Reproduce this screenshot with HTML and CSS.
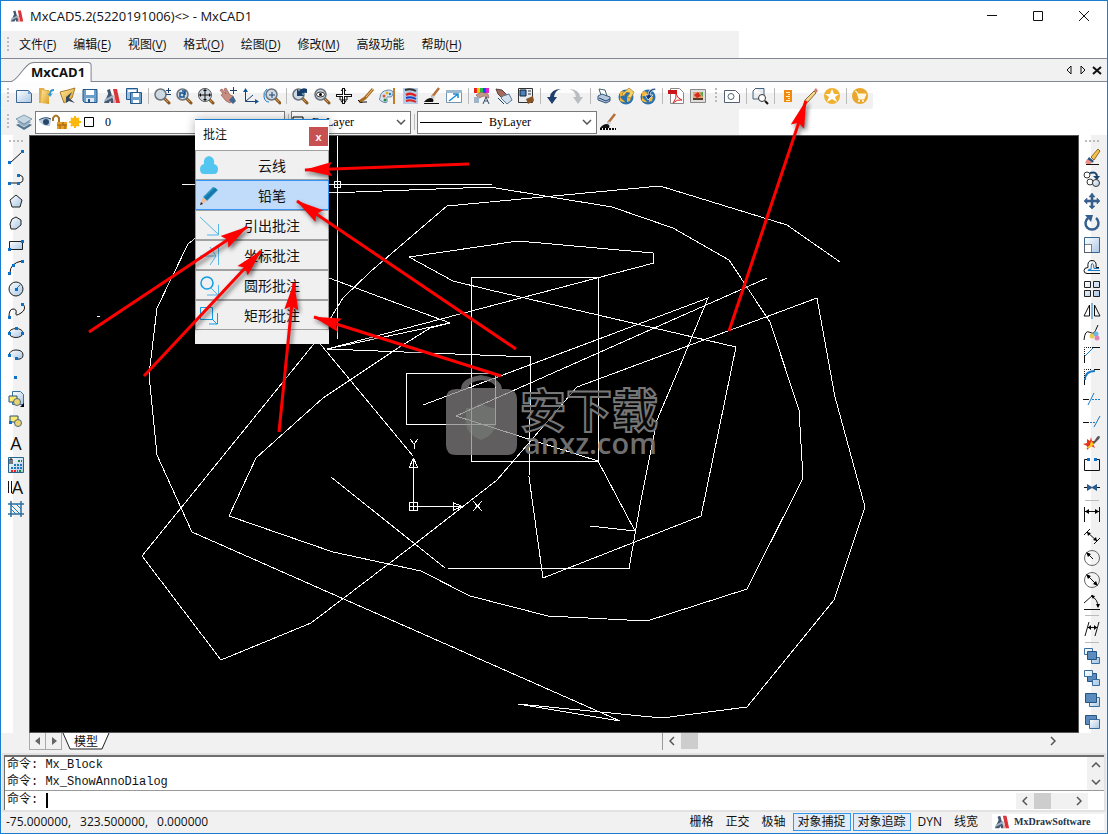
FILE: index.html
```html
<!DOCTYPE html>
<html lang="zh-CN">
<head>
<meta charset="utf-8">
<title>MxCAD5.2(5220191006)&lt;&gt; - MxCAD1</title>
<link rel="stylesheet" href="styles.css">
</head>
<body>
<svg class="defs" aria-hidden="true">
  <defs>
    <linearGradient id="paper" x1="0" y1="0" x2="1" y2="1"><stop offset="0" stop-color="#fff"/><stop offset="1" stop-color="#a9c6e4"/></linearGradient>
    <linearGradient id="gold" x1="0" y1="0" x2="1" y2="1"><stop offset="0" stop-color="#ffe9a0"/><stop offset="1" stop-color="#dc9c20"/></linearGradient>
    <symbol id="lens" viewBox="0 0 18 18"><path d="M11 11l5 5" stroke="#8b5a20" stroke-width="3" stroke-linecap="round"/><path d="M11 11l4 4" stroke="#d79a4e"/><circle cx="7.500" cy="7.500" r="5.500" fill="#cfd9e2" stroke="#6b737d" stroke-width="1.500"/></symbol>
    <symbol id="logo" viewBox="0 0 18 18"><path d="M1 16L6 5l3 4-3 7zM4 3l3-1 4 14H8z" fill="#41576f"/><path d="M10 2h4l3 14h-4z" fill="#d8343a"/><path d="M2 12l8-4 1 2-10 5z" fill="#9db0c3"/><path d="M11 8l2 8h-3z" fill="#e99"/></symbol>
    <symbol id="brush" viewBox="0 0 18 18"><path d="M16 1L9 10" stroke="#b4713a" stroke-width="2.500"/><path d="M10 8l-3 4 2 1 3-3z" fill="#c9ccd0"/><path d="M8 11q-4 0-7 4h9q1-2 0-3z" fill="#111"/></symbol>
    <symbol id="globe" viewBox="0 0 18 18"><circle cx="9" cy="10" r="7.500" fill="#2b72ad"/><path d="M3 5q4-2 5 1t-3 3 1 4-3 1zM10 9l4 1-1 4-3 1z" fill="#f2b53a"/></symbol>
    <marker id="head" viewBox="0 0 28 16" refX="27" refY="8" markerWidth="28" markerHeight="16" markerUnits="userSpaceOnUse" orient="auto"><path d="M28 8L0 1l4 7-4 7z" fill="#f00"/></marker>
  </defs>
</svg>
<div class="window">
  <header class="titlebar">
    <svg class="app-icon" viewBox="0 0 18 18"><use href="#logo"/></svg>
    <h1>MxCAD5.2(5220191006)&lt;&gt; - MxCAD1</h1>
    <div class="window-buttons">
      <button aria-label="最小化"><svg viewBox="0 0 12 12"><path class="k" d="M1 5.500h10"/></svg></button>
      <button aria-label="最大化"><svg viewBox="0 0 12 12"><path class="k" d="M1.500 1.500h9v9h-9z"/></svg></button>
      <button aria-label="关闭"><svg viewBox="0 0 12 12"><path class="k" d="M1 1l10 10M11 1L1 11"/></svg></button>
    </div>
  </header>
  <nav class="menubar">
    <span class="grip"></span>
    <button>文件(<u>F</u>)</button><button>编辑(<u>E</u>)</button><button>视图(<u>V</u>)</button><button>格式(<u>O</u>)</button><button>绘图(<u>D</u>)</button><button>修改(<u>M</u>)</button><button>高级功能</button><button>帮助(<u>H</u>)</button>
  </nav>
  <div class="doc-tabs">
    <button class="doc-tab"><svg viewBox="0 0 82 20" preserveAspectRatio="none"><path d="M0 20C9 18 13 4 21 1q1-.5 3-.5h54q3 0 3 3V20" fill="#fff" stroke="#7d8290"/></svg><span>MxCAD1</span></button>
    <div class="doc-nav">
      <button aria-label="上一个"><svg viewBox="0 0 10 10"><path class="k" d="M7 1v8L3 5z"/></svg></button>
      <button aria-label="下一个"><svg viewBox="0 0 10 10"><path class="k" d="M3 1v8l4-4z"/></svg></button>
      <button aria-label="关闭文档"><svg viewBox="0 0 10 10"><path class="k w2" d="M1 2l8 7M9 2L1 9"/></svg></button>
    </div>
  </div>
  <div class="toolbar standard">
    <div class="strip">
    <span class="grip"></span>
    <button class="tool" aria-label="新建"><svg viewBox="0 0 18 18"><path d="M1.500 3.500h12l3 3v9h-15z" fill="url(#paper)" stroke="#3d6590"/><path d="M13 3v4h4" fill="#7ea3c8"/></svg></button>
    <button class="tool" aria-label="打开"><svg viewBox="0 0 18 18"><path d="M2 1h5l1 2h4v13H2z" fill="#e4b04a"/><path d="M5 3l7 2v12l-8-1z" fill="url(#gold)"/><path d="M17 2q-5 0-5 5l-2-1 3 4 3-4-2 1q0-3 3-3z" fill="#329bd4"/></svg></button>
    <button class="tool" aria-label="打开云图"><svg viewBox="0 0 18 18"><path d="M1 5l8-2 7-2-3 10-8 5z" fill="url(#gold)" stroke="#a87b2b"/><path d="M7 10l6-5-3 6 6 5-6-2-3 2z" fill="#33465e"/></svg></button>
    <button class="tool" aria-label="保存"><svg viewBox="0 0 18 18"><path d="M2 2.500h14v13H3.500L2 14z" fill="#6a9fcb" stroke="#24588a"/><path d="M5 3h8v5H5z" fill="#fff"/><path d="M5 11h8v4H5z" fill="#dde8f2"/><path d="M7 12h2v3H7z" fill="#24588a"/></svg></button>
    <button class="tool" aria-label="MxDraw"><svg viewBox="0 0 18 18"><use href="#logo"/></svg></button>
    <button class="tool" aria-label="另存为"><svg viewBox="0 0 18 18"><path d="M1.500 1.500h11v11h-11z" fill="#9fc1e0" stroke="#24588a"/><path d="M3 3h8v2H3z" fill="#fff"/><path d="M5.500 5.500h11v11h-11z" fill="#6a9fcb" stroke="#24588a"/><path d="M8 6h6v4H8zM8 13h6v3H8z" fill="#fff"/></svg></button>
    <span class="sep"></span>
    <button class="tool" aria-label="实时缩放"><svg viewBox="0 0 18 18"><use href="#lens"/><path class="n" d="M13 3.500h5M15.500 1v5M13 7.500h5"/></svg></button>
    <button class="tool" aria-label="窗口缩放"><svg viewBox="0 0 18 18"><use href="#lens"/><path d="M5 6h4v4H5zM7 4h3v4" fill="none" stroke="#17558f" stroke-width="1.500"/></svg></button>
    <button class="tool" aria-label="范围缩放"><svg viewBox="0 0 18 18"><use href="#lens"/><circle cx="8" cy="8" r="6.500" fill="#ccd5de" stroke="#555"/><path class="k" d="M8 3v10M3 8h10"/><path d="M8 2l2 2H6zM8 14l2-2H6zM2 8l2-2v4zM14 8l-2-2v4z"/></svg></button>
    <button class="tool" aria-label="平移"><svg viewBox="0 0 18 18"><path d="M1 3l2-1 4 5-2-5 2-1 4 7 3 1 1 4-4 3-4-2-5-6 2-1z" fill="#c98e80" stroke="#8b5148" stroke-width=".6"/><path d="M10 13l4-4 3 5-3 3z" fill="#41658f"/><path class="n" d="M14.500 0v7M11 3.500h7"/></svg></button>
    <button class="tool" aria-label="坐标系"><svg viewBox="0 0 18 18"><path class="n" d="M4.500 3v11.500h11M5 14l7-6"/><path d="M2 5l2.500-4L7 5zM14 12l4 2.500-4 2.500z" fill="#17558f"/></svg></button>
    <button class="tool" aria-label="动态缩放"><svg viewBox="0 0 18 18"><use href="#lens" x="1"/><path class="n" d="M9 5v6M6 8h6"/><path class="b" d="M4 2Q0 5 1 10t5 5"/></svg></button>
    <span class="sep"></span>
    <button class="tool" aria-label="上一视图"><svg viewBox="0 0 18 18"><use href="#lens"/><path d="M16 6V2q-5-2-8 2L6 2v7h7l-2-2q1-2 5-1z" fill="#153e6d"/></svg></button>
    <button class="tool" aria-label="查看"><svg viewBox="0 0 18 18"><use href="#lens"/><ellipse cx="7.500" cy="7.500" rx="4" ry="2.500" fill="#fff" stroke="#333"/><circle cx="7.500" cy="7.500" r="1.500"/></svg></button>
    <button class="tool" aria-label="十字平移"><svg viewBox="0 0 18 18"><path d="M8.500 1v16M1 8.500h16" stroke="#111" stroke-width="3"/><path d="M8.500 2v14M2 8.500h14" stroke="#fff"/><path class="k" d="M5 10v3h7v-3M6 4l2.500-3L11 4M6 14l2.500 3 2.500-3"/></svg></button>
    <button class="tool" aria-label="刷新"><svg viewBox="0 0 18 18"><path d="M16 2L8 11l-6 4" stroke="#a66a20" stroke-width="3" fill="none"/><path d="M16 2L9 10" stroke="#f3c97a"/><path class="k" d="M1 13q2 4 6 2l3 0"/></svg></button>
    <button class="tool" aria-label="颜色"><svg viewBox="0 0 18 18"><path d="M1 11q0-7 8-8 6 0 5 4t-4 3-2 3-4 2-3-4z" fill="#d5e5f3" stroke="#6787a6"/><circle cx="5" cy="9" r="1.500" fill="#d52"/><circle cx="8" cy="6" r="1.500" fill="#e2b21d"/><circle cx="6" cy="13" r="1.500" fill="#2a8b3f"/><circle cx="11" cy="7" r="1.200" fill="#27c"/><path d="M15 1v16" stroke="#c27d28" stroke-width="2"/></svg></button>
    <button class="tool" aria-label="图层"><svg viewBox="0 0 18 18"><path d="M2 1h15v16H2z" fill="#b5cde6"/><path d="M4 3q6-2 11 1" stroke="#333" stroke-width="2" fill="none"/><path d="M5 8q5-3 10 1" stroke="#e42121" stroke-width="2.500" fill="none"/><path d="M5 11q5-2 10 1" stroke="#1747c8" stroke-width="2" fill="none"/><path d="M5 14q5-2 10 1" stroke="#e42121" stroke-width="2" fill="none"/></svg></button>
    <button class="tool" aria-label="线型"><svg viewBox="0 0 18 18"><use href="#brush"/><path class="k" d="M1 16.500h15"/></svg></button>
    <button class="tool" aria-label="全屏"><svg viewBox="0 0 18 18"><path d="M1.500 3.500h15v12h-15z" fill="#fff" stroke="#7594b0"/><path d="M1 3h16v3H1z" fill="#9db8cf"/><path d="M4 14l9-7M8 7h5v4" stroke="#1c8bd0" stroke-width="1.500" fill="none"/></svg></button>
    <span class="sep"></span>
    <button class="tool" aria-label="选择颜色"><svg viewBox="0 0 18 18"><path d="M1 1h3v5H1z" fill="#e22"/><path d="M4 1h3v5H4z" fill="#fc0"/><path d="M7 1h3v5H7z" fill="#2b4"/><path d="M10 1h3v5h-3z" fill="#24f"/><path d="M13 1h3v5h-3z" fill="#d2c"/><path d="M3 8l5-3 7 2 1 4-5-2-5 2z" fill="#bf9a87" stroke="#855" stroke-width=".6"/><path d="M1 10h5v6H1z" fill="#9fb4c9"/><path d="M10 17l3-7 3 7M11 14h4" fill="none" stroke="#35506e"/></svg></button>
    <button class="tool" aria-label="特性匹配"><svg viewBox="0 0 18 18"><path d="M1 2l6 1 5 5-4 4-5-5z" fill="#a56a5c" stroke="#544"/><path d="M8 9l6-2 3 6-5 4-6-6z" fill="#d4e0ec" stroke="#557b9c"/><path class="n" d="M3 11l6 6"/></svg></button>
    <button class="tool" aria-label="块编辑"><svg viewBox="0 0 18 18"><path d="M1.500 1.500h14v14h-14z" fill="#e8eef4" stroke="#333"/><path d="M3 3h6v6H3z" fill="#4a83bb" stroke="#123"/><path d="M11 4h3M11 7h3" stroke="#333"/><path d="M9 12l7-3 1 5-6 3z" fill="#8a5524"/></svg></button>
    <span class="sep"></span>
    <button class="tool" aria-label="撤销"><svg viewBox="0 0 18 18"><path d="M16 2q-6 1-7 8h3l-5 7-5-7h3Q6 2 16 2z" fill="#1d3f6b"/></svg></button>
    <button class="tool" aria-label="重做"><svg viewBox="0 0 18 18"><path d="M2 2q6 1 7 8H6l5 7 5-7h-3Q12 2 2 2z" fill="#b9bdc1"/></svg></button>
    <span class="sep"></span>
    <button class="tool" aria-label="打印"><svg viewBox="0 0 18 18"><path d="M4 2l6 1 2 6-6-1z" fill="#fff" stroke="#466"/><path d="M3 9l4-2 8 3v4l-4 2-8-3z" fill="#b5c7db" stroke="#35577c"/><path class="n" d="M4 11l7 3 4-2"/></svg></button>
    <button class="tool" aria-label="在线图纸"><svg viewBox="0 0 18 18"><use href="#globe"/><path d="M5 7L12 1l5 4-3 6-4-1 3-4-3-1-4 4z" fill="#f7d367" stroke="#a2782f" stroke-width=".7"/></svg></button>
    <button class="tool" aria-label="更新"><svg viewBox="0 0 18 18"><use href="#globe"/><path d="M17 3q-6 0-6 5h3l-5 5-3-5h3q0-6 7-7z" fill="#153b6c" stroke="#fff" stroke-width=".7"/></svg></button>
    <span class="sep"></span>
    <button class="tool" aria-label="PDF"><svg viewBox="0 0 18 18"><path d="M3.500 1.500h9l4 4v11h-13z" fill="#fff" stroke="#888"/><path d="M1 3h9v4H1z" fill="#ca1519"/><path d="M9 7q2 5 6 6-5-1-9 3 4-5 3-9" fill="none" stroke="#d22"/></svg></button>
    <button class="tool" aria-label="图像"><svg viewBox="0 0 18 18"><path d="M1.500 2.500h15v13h-15z" fill="#ddd" stroke="#888"/><path d="M4 5h10v8H4z" fill="#e8a46c"/><path d="M5 8l4-3 3 4-4 2z" fill="#d32c22"/><path d="M11 6l3-1v5z" fill="#4ca64c"/><path d="M4 11h10v2H4z" fill="#5a3a2a"/></svg></button>
    <span class="grip mid"></span>
    <button class="tool" aria-label="截图"><svg viewBox="0 0 18 18"><path d="M1.500 3.500h11l4 4v8h-15z" fill="#fff" stroke="#516173"/><circle cx="8" cy="9.500" r="3" fill="none" stroke="#516173"/></svg></button>
    <span class="sep"></span>
    <button class="tool" aria-label="查找"><svg viewBox="0 0 18 18"><path d="M4 1.500h9v7M2 4v8h6M4 2L2 4" fill="#e8ebef" stroke="#47607c"/><circle cx="11" cy="11" r="3.500" fill="#fff" stroke="#333"/><path class="k w2" d="M14 14l3 3"/></svg></button>
    <span class="sep"></span>
    <button class="tool" aria-label="测量"><svg viewBox="0 0 18 18"><path d="M5 3h8v12H5z" fill="#f08a10"/><path d="M7 5.500h4M9 7.500h2M7 9.500h4M9 11.500h2M7 13.500h4" stroke="#fff3c0"/></svg></button>
    <button class="tool" aria-label="批注"><svg viewBox="0 0 18 18"><path d="M4 13L13 4l2 2L7 15l-4 2z" fill="#f2d489" stroke="#8a6b3a"/><path d="M13 3l2-2 2 3-2 2z" fill="#d47c78"/></svg></button>
    <button class="tool" aria-label="收藏"><svg viewBox="0 0 18 18"><circle cx="9" cy="9" r="8" fill="#f1b02f"/><path d="M9 2l2 5h5l-4 3 2 5-5-3-5 3 2-5-4-3h5z" fill="#fff"/></svg></button>
    <span class="sep"></span>
    <button class="tool" aria-label="商城"><svg viewBox="0 0 18 18"><circle cx="9" cy="9" r="8" fill="#eaa72e"/><path d="M4 4l2 1 2 7h5l2-5H7" fill="#fff7df" stroke="#fff7df"/><circle cx="8" cy="14" r="1" fill="#fff"/><circle cx="12" cy="14" r="1" fill="#fff"/></svg></button>
    </div>
  </div>
  <div class="toolbar layers">
    <span class="grip"></span>
    <button class="tool" aria-label="图层管理"><svg viewBox="0 0 18 18"><path d="M1 12l8 5 8-5-8-4z" fill="#527491"/><path d="M1 9l8 5 8-5-8-4z" fill="#92aabd" stroke="#fff" stroke-width=".6"/><path d="M1 6l8 5 8-5-8-4z" fill="#c7d8e5" stroke="#5f7c95" stroke-width=".7"/></svg></button>
    <div class="combo layer-combo">
      <svg viewBox="0 0 60 18" class="layer-icons"><path d="M1 8q5-5 12-2l-1 7q-7 1-11-5z" fill="#b8cde1"/><circle cx="8" cy="9" r="3" fill="#294766"/><path class="n" d="M1 7q6-4 12-1"/><path d="M19 9h10v7H19z" fill="#e79c22"/><path d="M19 12h10M25 9v3M22 12v4M27 12v4" stroke="#9d6211"/><path d="M15 8V5q3-5 6 0v4" fill="none" stroke="#aa7424" stroke-width="2"/><circle cx="37" cy="9" r="4.500" fill="#fdb90b"/><path d="M37 3v12M31 9h12M33 5l8 8M41 5l-8 8" stroke="#fdb90b" stroke-width="2"/><path d="M46.500 4.500h9v9h-9z" fill="#fff" stroke="#000"/></svg>
      <select aria-label="当前图层"><option>0</option></select>
    </div>
    <span class="sep"></span>
    <div class="combo color-combo"><svg viewBox="0 0 12 12"><path d="M1 1h10v10H1z" fill="#fff" stroke="#000"/></svg><select aria-label="颜色"><option>ByLayer</option></select><svg class="chevron" viewBox="0 0 10 6"><path d="M1 1l4 4 4-4"/></svg></div>
    <span class="sep"></span>
    <div class="combo type-combo"><span class="line-sample"></span><select aria-label="线型"><option>ByLayer</option></select><svg class="chevron" viewBox="0 0 10 6"><path d="M1 1l4 4 4-4"/></svg></div>
    <button class="tool" aria-label="线型管理"><svg viewBox="0 0 18 18"><use href="#brush"/><path d="M1 16h16" stroke="#000" stroke-width="2" stroke-dasharray="2 1"/></svg></button>
  </div>
  <main class="workspace">
    <div class="side left">
      <span class="grip"></span>
      <button class="tool" aria-label="直线"><svg viewBox="0 0 18 18"><path class="k" d="M3 15L15 4"/><path class="p" d="M1 13h3v3H1zM14 2h3v3h-3z"/></svg></button>
      <button class="tool" aria-label="多段线"><svg viewBox="0 0 18 18"><path class="k" d="M2 13h9q5 0 5-4t-5-4"/><path class="p" d="M1 12h3v3H1zM10 12h3v3h-3zM10 4h3v3h-3z"/></svg></button>
      <button class="tool" aria-label="多边形"><svg viewBox="0 0 18 18"><path d="M9 3l6 5-2 7H5L3 8z" fill="url(#paper)" stroke="#222"/></svg></button>
      <button class="tool" aria-label="闭合多段线"><svg viewBox="0 0 18 18"><path d="M9 3l5 3v5l-5 4H4l-1-5 2-5z" fill="url(#paper)" stroke="#222"/></svg></button>
      <button class="tool" aria-label="矩形"><svg viewBox="0 0 18 18"><path d="M2.500 5.500h13v8h-13z" fill="url(#paper)" stroke="#222"/><path class="p" d="M1 12h3v3H1zM14 4h3v3h-3z"/></svg></button>
      <button class="tool" aria-label="圆弧"><svg viewBox="0 0 18 18"><path class="k" d="M3 15Q3 5 15 3"/><path class="p" d="M1 14h3v3H1zM5 6h3v3H5zM14 2h3v3h-3z"/></svg></button>
      <button class="tool" aria-label="圆"><svg viewBox="0 0 18 18"><circle cx="9" cy="9" r="7" fill="url(#paper)" stroke="#222"/><path class="b" d="M9 9l4-4"/><path class="p" d="M8 8h3v3H8z"/></svg></button>
      <button class="tool" aria-label="样条曲线"><svg viewBox="0 0 18 18"><path class="k" d="M2 15Q2 7 6 7t3 4 5 0 2-9"/><path class="p" d="M1 14h3v3H1zM14 1h3v3h-3z"/></svg></button>
      <button class="tool" aria-label="椭圆"><svg viewBox="0 0 18 18"><ellipse cx="9" cy="9" rx="7" ry="4.500" fill="url(#paper)" stroke="#222"/><path class="p" d="M1 8h3v3H1zM14 8h3v3h-3zM8 3h3v3H8z"/></svg></button>
      <button class="tool" aria-label="椭圆弧"><svg viewBox="0 0 18 18"><path d="M2 9q1-5 7-5 7 0 7 5t-7 4" fill="url(#paper)" stroke="#222"/><path class="p" d="M1 8h3v3H1zM8 11h3v3H8z"/></svg></button>
      <button class="tool" aria-label="点"><svg viewBox="0 0 18 18"><path class="p" d="M7 8h3v3H7z"/></svg></button>
      <button class="tool" aria-label="插入块"><svg viewBox="0 0 18 18"><path d="M5.500 1.500h8l3 3v10h-11z" fill="url(#paper)" stroke="#3a70a8"/><path d="M2 6h8v6H2z" fill="#ffe96e" stroke="#25527b"/><circle cx="10" cy="12" r="3.500" fill="#e8d275" stroke="#4d6a7e"/><path d="M17 13v4h-4z"/></svg></button>
      <button class="tool" aria-label="创建块"><svg viewBox="0 0 18 18"><path d="M3 4h8v6H3z" fill="#ffe96e" stroke="#25527b"/><circle cx="11" cy="11" r="3.500" fill="#e8d275" stroke="#4d6a7e"/><path class="p" d="M2 9h3v3H2z"/></svg></button>
      <button class="tool letter" aria-label="单行文字">A</button>
      <button class="tool" aria-label="图案填充"><svg viewBox="0 0 18 18"><path d="M1.500 1.500h15v15h-15z" fill="url(#paper)" stroke="#27638f"/><path d="M3 8V3h2v5" fill="none" stroke="#000"/><path d="M4 12h11M7 9h8" stroke="#27b" stroke-width="2" stroke-dasharray="2 1"/><path d="M4 15h7" stroke="#e22" stroke-width="2" stroke-dasharray="2 1"/><path d="M11 5h4M12 15h3" stroke="#183" stroke-width="2" stroke-dasharray="2 1"/></svg></button>
      <button class="tool letter multi" aria-label="多行文字">A</button>
      <button class="tool" aria-label="填充"><svg viewBox="0 0 18 18"><path d="M1 4h16M1 14h16M4 1v16M14 1v16" stroke="#2d6d9e" stroke-width="1.500"/><path class="b" d="M4 9l5 5M4 5l9 9M9 4l5 5"/></svg></button>
    </div>
    <svg class="canvas" role="img" aria-label="图形区">
      <g transform="translate(-30 -136)">
        <g class="cad">
          <path d="M840 262L787 225 660 186 447 206 370 272 343 298 317 340 142 556 221 660 311 623 420 540 497 480 577 387 817 298 835 397 865 507 834 600 747 707 662 718 518 704 620 721 192 532 157 455 149 375 157 308 188 244 240 202 329 193 490 187 612 207 673 228 729 260 770 322 799 410 803 478 747 589 647 621 548 616 470 596 421 571 333 552 229 516 256 458 323 398 398 348 430 328 450 323 329 278"/>
          <path d="M413 456L317 340M423 405L708 298 680 366 657 420 640 505 629 569 445 568 331 477M767 278L456 416 598 461 635 531 590 526"/>
          <path d="M450 323L327 349 531 357 529 477 543 578 701 516 736 347 490 290 453 281 409 257 518 241 653 253 654 263 327 349"/>
          <path d="M471.500 277.500h127v184h-127zM406.500 373.500h89v51h-89z"/>
          <path d="M182 184.500h310M337.500 136v203M334.500 181.500h6v6h-6zM97 316.500h3"/>
          <path d="M409.500 502.500h8v8h-8zM413.500 511v-53l-4 9h8l-4-9M409 506.500h53l-9-4v8l9-4M410 439l4 5 4-5M414 444v5M473 501l9 10M482 501l-9 10"/>
        </g>
        <g class="mark">
          <path d="M461 389q0-11 20-14 20 3 21 14h6q9 1 9 10v46q0 10-10 10h-51q-10 0-10-10v-46q0-10 10-10zm7-1h28q-2-7-14-8-12 1-14 8z"/>
          <path class="shield" d="M466 408q8 0 15-5 7 5 15 5v14q0 12-15 18-15-6-15-18z"/>
          <text class="mark-cn" x="520" y="427">安下载</text>
          <text class="mark-en" x="524" y="454">anxz.com</text>
        </g>
      </g>
    </svg>
    <div class="side right">
      <span class="grip"></span>
      <button class="tool" aria-label="删除"><svg viewBox="0 0 18 18"><path d="M8 9L15 1l2 2-6 9z" fill="#f3c14b" stroke="#8b6b26"/><path d="M6 9l5 4-2 2-5-3z" fill="#29537e"/><path d="M4 11l5 3-2 3-5-2z" fill="#e98f87"/><path class="k" d="M3 16.500h13"/></svg></button>
      <button class="tool" aria-label="复制"><svg viewBox="0 0 18 18"><circle cx="4" cy="5" r="3" fill="none" stroke="#333"/><circle cx="7" cy="12" r="3" fill="none" stroke="#333"/><circle cx="13" cy="13" r="3.500" fill="url(#paper)" stroke="#333"/><path class="n w2" d="M7 3q7-2 7 4"/><path d="M10 6h7l-3 4z" fill="#1b436f"/></svg></button>
      <button class="tool" aria-label="移动"><svg viewBox="0 0 18 18"><path d="M9 1l3 4h-2v3h4V6l3 3-3 3v-2h-4v4h2l-3 3-3-3h2v-4H4v2L1 9l3-3v2h4V5H6z" fill="#355f8f" stroke="#355f8f" stroke-width=".6"/></svg></button>
      <button class="tool" aria-label="旋转"><svg viewBox="0 0 18 18"><path d="M5 4A6.500 6.500 0 1 0 13 4" fill="none" stroke="#355f8f" stroke-width="2.500"/><path d="M2 1h8L8 8z" fill="#355f8f"/></svg></button>
      <button class="tool" aria-label="缩放"><svg viewBox="0 0 18 18"><path d="M1.500 1.500h15v15h-15z" fill="url(#paper)" stroke="#35648f"/><path d="M1.500 8.500h7v8h-7z" fill="#fff" stroke="#111" stroke-dasharray="1 1"/></svg></button>
      <button class="tool" aria-label="偏移"><svg viewBox="0 0 18 18"><path class="k" d="M17 15.500H4q-3 0-3-3t4-3q-1-7 4-7t4 7h3"/><path class="b" d="M17 12.500H5q0-2 3-1 0-6 1-6 2 0 2 5h5"/></svg></button>
      <button class="tool" aria-label="阵列"><svg viewBox="0 0 18 18"><path d="M1.500 1.500h6v6h-6zM10.500 1.500h6v6h-6zM1.500 10.500h6v6h-6zM10.500 10.500h6v6h-6z" fill="url(#paper)" stroke="#222"/></svg></button>
      <button class="tool" aria-label="镜像"><svg viewBox="0 0 18 18"><path class="k" d="M6.500 3v11H1zM11.500 3v11H17z"/><path class="b" d="M9 1v16"/></svg></button>
      <button class="tool" aria-label="编辑样条"><svg viewBox="0 0 18 18"><path class="k" d="M1 16q1-10 5-8t5 1 4-8"/><circle cx="9" cy="12" r="2.500" fill="#ebcb4e"/><circle cx="13" cy="10" r="2.500" fill="#6ab6e5"/><circle cx="14" cy="14" r="2.500" fill="#df86b7"/></svg></button>
      <button class="tool" aria-label="倒角"><svg viewBox="0 0 18 18"><path class="k" d="M1.500 17v-7M9 1.500h8"/><path class="b" d="M2 10l8-8"/><path class="k" d="M1.500 10V1.500H9" stroke-dasharray="1 1"/></svg></button>
      <button class="tool" aria-label="圆角"><svg viewBox="0 0 18 18"><path class="k" d="M1.500 17v-6M11 1.500h6"/><path class="b w2" d="M2 12Q2 3 12 3"/><path class="k" d="M1.500 10V1.500H9" stroke-dasharray="1 1"/></svg></button>
      <button class="tool" aria-label="修剪"><svg viewBox="0 0 18 18"><path class="k" d="M0 9.500h6"/><path class="b" d="M5 15l6-12"/><path class="b" d="M9 9.500h9" stroke-dasharray="2 1"/></svg></button>
      <button class="tool" aria-label="延伸"><svg viewBox="0 0 18 18"><path class="k" d="M0 10.500h6"/><path class="b" d="M7 10.500h6" stroke-dasharray="2 1"/><path class="b" d="M11 15l6-11"/></svg></button>
      <button class="tool" aria-label="分解"><svg viewBox="0 0 18 18"><path d="M8 3l1 4 4 0-3 3 2 4-4-2-4 4v-4l-4-2 4-1 0-4 3 2z" fill="#e63517"/><path d="M8 7l-1 4-5 4 6-2 3-3z" fill="#ffca29"/><path d="M10 9l4-6q2-2 3 0l-1 2-5 5z" fill="#555"/></svg></button>
      <button class="tool" aria-label="打断"><svg viewBox="0 0 18 18"><path class="k" d="M5 3.500H1.500v11h15v-11H13"/><path class="p" d="M4 2h3v3H4zM11 2h3v3h-3z"/></svg></button>
      <button class="tool" aria-label="合并"><svg viewBox="0 0 18 18"><path class="k" d="M1 9.500h16"/><path d="M4 6l5 3 5-3v7l-5-3-5 3z" fill="#2b5c8d"/></svg></button>
      <span class="sep"></span>
      <button class="tool" aria-label="线性标注"><svg viewBox="0 0 18 18"><path class="k" d="M1.500 2v15M16.500 2v15M2 6.500h14"/><path d="M2 6.500L6 4v5zM16 6.500L12 4v5z"/></svg></button>
      <button class="tool" aria-label="对齐标注"><svg viewBox="0 0 18 18"><path class="k" d="M1 8l6-6M11 17l6-6M4 5l10 9"/><path d="M4 5l1 4 3-3zM14 14l-4-1 3-3z"/></svg></button>
      <button class="tool" aria-label="半径标注"><svg viewBox="0 0 18 18"><circle cx="9" cy="9" r="7.500" fill="none" stroke="#666"/><path class="k" d="M4 4l6 6"/><path d="M3 3l5 2-3 3z"/></svg></button>
      <button class="tool" aria-label="直径标注"><svg viewBox="0 0 18 18"><circle cx="9" cy="9" r="7.500" fill="none" stroke="#666"/><path class="k" d="M4 4l10 10"/><path d="M3 3l5 2-3 3zM15 15l-5-2 3-3z"/></svg></button>
      <button class="tool" aria-label="角度标注"><svg viewBox="0 0 18 18"><path class="k" d="M1 16.500h16M1 10l9-8"/><path class="k" d="M8 3q7 3 7 11"/><path d="M8 2l4 1-2 3zM15 15l-2-4h4z"/></svg></button>
      <span class="sep"></span>
      <button class="tool" aria-label="编辑标注"><svg viewBox="0 0 18 18"><path class="k" d="M2 16L6 2M12 16l4-14M5 7.500h9"/><path d="M5 7.500L8 5v5zM14 7.500L11 5v5z"/></svg></button>
      <span class="sep"></span>
      <button class="tool" aria-label="前置"><svg viewBox="0 0 18 18"><path d="M1.500 1.500h8v6h-8zM8.500 10.500h8v6h-8z" fill="url(#paper)" stroke="#386d9f"/><path d="M4.500 4.500h9v8h-9z" fill="#5b8cbd" stroke="#245482"/></svg></button>
      <button class="tool" aria-label="后置"><svg viewBox="0 0 18 18"><path d="M4.500 4.500h9v8h-9z" fill="#5b8cbd" stroke="#245482"/><path d="M1.500 1.500h8v6h-8zM9.500 10.500h7v6h-7z" fill="url(#paper)" stroke="#386d9f"/></svg></button>
      <button class="tool" aria-label="置于对象之上"><svg viewBox="0 0 18 18"><path d="M6.500 6.500h10v9h-10z" fill="url(#paper)" stroke="#386d9f"/><path d="M2.500 2.500h11v9h-11z" fill="#5b8cbd" stroke="#245482"/></svg></button>
      <button class="tool" aria-label="置于对象之下"><svg viewBox="0 0 18 18"><path d="M2.500 2.500h11v9h-11z" fill="#5b8cbd" stroke="#245482"/><path d="M6.500 6.500h10v9h-10z" fill="url(#paper)" stroke="#386d9f"/></svg></button>
    </div>
  </main>
  <div class="model-row">
    <button class="step" aria-label="向左"><svg viewBox="0 0 10 10"><path d="M7 1v8L2 5z"/></svg></button>
    <button class="step" aria-label="向右"><svg viewBox="0 0 10 10"><path d="M3 1v8l5-4z"/></svg></button>
    <button class="model-tab"><svg viewBox="0 0 48 17"><path d="M1 0l7 16h32l7-16" fill="#fff" stroke="#222"/></svg><span>模型</span></button>
    <span class="model-space"></span>
    <div class="hscroll"><button aria-label="左滚"><svg class="chevron left-c" viewBox="0 0 10 6"><path d="M1 1l4 4 4-4"/></svg></button><span class="thumb"></span><button class="end" aria-label="右滚"><svg class="chevron right-c" viewBox="0 0 10 6"><path d="M1 1l4 4 4-4"/></svg></button></div>
  </div>
  <section class="command">
    <div class="log"><div><p>命令: Mx_Block</p><p>命令: Mx_ShowAnnoDialog</p></div>
      <div class="vscroll"><button aria-label="上滚"><svg class="chevron up-c" viewBox="0 0 10 6"><path d="M1 1l4 4 4-4"/></svg></button><button aria-label="下滚"><svg class="chevron" viewBox="0 0 10 6"><path d="M1 1l4 4 4-4"/></svg></button></div></div>
    <div class="prompt"><label for="cmd">命令:</label><span class="caret"></span><input id="cmd" type="text">
      <div class="hscroll small"><button aria-label="左滚"><svg class="chevron left-c" viewBox="0 0 10 6"><path d="M1 1l4 4 4-4"/></svg></button><span class="thumb"></span><button class="end" aria-label="右滚"><svg class="chevron right-c" viewBox="0 0 10 6"><path d="M1 1l4 4 4-4"/></svg></button></div></div>
  </section>
  <footer class="status">
    <output><span>-75.000000,</span><span>323.500000,</span><span>0.000000</span></output>
    <button>栅格</button><button>正交</button><button>极轴</button><button class="on">对象捕捉</button><button class="on">对象追踪</button><button>DYN</button><button>线宽</button>
    <div class="brand"><svg viewBox="0 0 18 18"><use href="#logo"/></svg><span>MxDrawSoftware</span></div>
  </footer>

  <section class="palette" aria-label="批注">
    <header><h2>批注</h2><button class="close" aria-label="关闭批注">x</button></header>
    <button class="anno"><svg viewBox="0 0 20 20"><path d="M5 8q-1-7 5-8 6 1 5 8 4 1 4 5 0 5-4 5H5q-4 0-4-5 0-4 4-5z" fill="#52c5f0"/></svg><span>云线</span></button>
    <button class="anno active"><svg viewBox="0 0 20 20"><path d="M4 11L14 1q2 0 5 3L8 15z" fill="#2695c5"/><path d="M5 12L16 2l2 2L8 14z" fill="#1678a8"/><path d="M4 11l4 4-7 4z" fill="#eebc99"/><path d="M2 16l2 2-3 1z" fill="#222"/></svg><span>铅笔</span></button>
    <button class="anno"><svg viewBox="0 0 20 20"><path class="s" d="M1 1l18 17M19.500 8v11H8"/></svg><span>引出批注</span></button>
    <button class="anno"><svg viewBox="0 0 20 20"><path class="s" d="M19.500 1v18M11 1l6 9-6 9M1 10h16"/></svg><span>坐标批注</span></button>
    <button class="anno"><svg viewBox="0 0 20 20"><circle cx="8" cy="7" r="6" fill="none" stroke="#0e9de5" stroke-width="1.500"/><path class="s" d="M12 12l7 7M19.500 9v10H8"/></svg><span>圆形批注</span></button>
    <button class="anno"><svg viewBox="0 0 20 20"><path d="M1.500 1.500h12v12h-12z" fill="none" stroke="#0e9de5"/><path d="M13 13l5 5M18.500 7v11H10" fill="none" stroke="#0e9de5"/></svg><span>矩形批注</span></button>
  </section>
  <svg class="arrows" aria-hidden="true">
    <path marker-end="url(#head)" d="M469 164L305 170"/><path marker-end="url(#head)" d="M516 349L297 201"/><path marker-end="url(#head)" d="M89 332L247 227"/><path marker-end="url(#head)" d="M144 376L261 251"/><path marker-end="url(#head)" d="M279 432L294 283"/><path marker-end="url(#head)" d="M501 376L314 317"/><path marker-end="url(#head)" d="M729 331L806 101"/>
  </svg>
</div>
</body>
</html>
```
FILE: styles.css
```css
* { box-sizing: border-box; }
body { margin: 0; font: 12px/16px "Open Sans", "Noto Sans CJK SC", sans-serif; color: #111; }
h1, h2, p { margin: 0; font: inherit; }
button, select, input { font: inherit; color: inherit; background: none; border: 0; padding: 0; margin: 0; }
.defs { position: absolute; width: 0; height: 0; }
.k { fill: none; stroke: #111; }
.b { fill: none; stroke: #1879c4; }
.n { fill: none; stroke: #1b436f; }
.p { fill: #0d72c7; }
.s { fill: none; stroke: #55b6e8; }
.w2 { stroke-width: 2; }

.window { position: relative; display: flex; flex-direction: column; min-height: 100vh; border: 1px solid #1a7dcf; background: #f1f1f1; overflow: hidden; }
.titlebar { display: flex; align-items: center; height: 30px; background: #fff; }
.app-icon { width: 14px; height: 14px; margin: 0 6px 0 9px; }
.titlebar h1 { flex: 1; font-size: 13px; }
.window-buttons { display: flex; }
.window-buttons button { width: 46px; height: 28px; display: grid; place-items: center; }
.window-buttons svg { width: 12px; height: 12px; }

.grip { flex: none; width: 12px; height: 16px; background: repeating-linear-gradient(#bbb 0 2px, transparent 2px 4px) 6px 0 / 2px 100% no-repeat; }
.sep { flex: none; width: 6px; height: 16px; background: linear-gradient(#bbb, #bbb) center / 1px 100% no-repeat; }

.menubar { display: flex; align-items: center; gap: 1px; height: 28px; background: linear-gradient(90deg, #f1f1f1 66.7%, #fff 66.7%); border-bottom: 1px solid #848895; }
.menubar .grip { width: 9px; }
.menubar button { padding: 0 8px; }
.menubar u { text-underline-offset: 2px; }

.doc-tabs { display: flex; align-items: flex-end; justify-content: space-between; height: 23px; border-bottom: 1px solid #848895; }
.doc-tab { position: relative; height: 20px; margin: 0 0 -1px 9px; padding: 0 7px 0 21px; font-size: 13px; line-height: 18px; font-weight: 700; }
.doc-tab svg { position: absolute; inset: 0; width: 100%; height: 100%; }
.doc-tab span { position: relative; }
.doc-nav { display: flex; align-self: center; padding-right: 3px; }
.doc-nav button { width: 14px; height: 14px; display: grid; place-items: center; }
.doc-nav svg { width: 10px; height: 10px; }

.toolbar { display: flex; align-items: center; height: 27px; background: #fff; }
.strip { display: flex; align-items: center; height: 100%; padding-right: 2px; border-radius: 3px; background: linear-gradient(#fdfdfd 11px, #f1f1f1 11px); }
.toolbar.layers { height: 26px; background: linear-gradient(90deg, #f1f1f1 66.7%, #fff 66.7%); }
.tool { flex: none; display: grid; place-items: center; width: 22px; height: 22px; }
.tool svg { width: 18px; height: 18px; }
.combo { display: flex; align-items: center; height: 23px; border: 1px solid #7b7b7b; background: #fff; font: 12px/16px "Liberation Serif", "Noto Sans CJK SC", serif; color: #000; }
.combo select { flex: 1; min-width: 0; appearance: none; }
.combo > svg { flex: none; }
.layer-combo { width: 250px; gap: 7px; padding-left: 2px; }
.layer-icons { width: 60px; height: 18px; }
.color-combo { width: 120px; gap: 8px; padding: 0 4px 0 0; }
.color-combo > svg:first-child { width: 12px; height: 12px; }
.type-combo { width: 180px; gap: 7px; padding: 0 4px 0 2px; }
.line-sample { flex: none; width: 62px; height: 1px; background: #000; }
.chevron { width: 10px; height: 6px; fill: none; stroke: #555; stroke-width: 1.5; }
.left-c { transform: rotate(90deg); }
.right-c { transform: rotate(-90deg); }
.up-c { transform: rotate(180deg); }

.workspace { flex: 1; display: flex; min-height: 598px; }
.side { flex: none; display: flex; flex-direction: column; align-items: center; width: 28px; background: linear-gradient(90deg, #fff 12px, #f1f1f1 12px); }
.side.left { padding-left: 2px; }
.side.right { padding-right: 2px; }
.side .grip { width: 14px; height: 11px; background: repeating-linear-gradient(90deg, #bbb 0 2px, transparent 2px 4px) 0 5px / 100% 2px no-repeat; }
.side .sep { width: 14px; height: 5px; background: linear-gradient(#bbb, #bbb) center / 100% 1px no-repeat; }
.letter { font: 18px/22px "Open Sans", sans-serif; }
.multi { width: 16px; background: linear-gradient(90deg, #111 1px, transparent 1px 3px, #111 3px 4px, transparent 4px) 0 5px / 4px 12px no-repeat; padding-left: 3px; }
.canvas { flex: 1; min-width: 0; height: auto; background: #000; border: 1px solid #555; }
.cad { fill: none; stroke: #fff; stroke-width: 1; shape-rendering: crispEdges; }
.mark { fill: #858283; fill-opacity: .72; fill-rule: evenodd; }
.mark .shield { fill: #8c9490; fill-opacity: .35; }
.mark-cn { font: 700 46px "Noto Sans CJK SC", sans-serif; fill: #111; fill-opacity: .5; stroke: #777; stroke-width: 2; }
.mark-en { font: 600 29px "Open Sans", sans-serif; fill: #777; fill-opacity: .95; }

.model-row { display: flex; height: 17px; margin: 0 28px; background: #f1f1f1; }
.step { width: 16px; border: 1px solid #aaa; border-width: 0 1px 1px 0; display: grid; place-items: center; }
.step:first-child { width: 17px; border-left-width: 1px; }
.step svg { width: 10px; height: 10px; fill: #666; }
.model-tab { position: relative; width: 48px; line-height: 15px; }
.model-tab svg { position: absolute; inset: 0; width: 48px; height: 17px; }
.model-tab span { position: relative; }
.model-space { flex: 1; border-right: 1px solid #999; }
.hscroll { display: flex; width: 39.6%; height: 16px; }
.hscroll button { width: 18px; display: grid; place-items: center; }
.thumb { width: 17px; background: #cdcdcd; }
.hscroll .end { margin: 0 17px 0 auto; }
.hscroll.small { width: 72px; }
.hscroll.small .end { margin-right: 0; }

.command { margin: 5px 3px 1px; border-top: 2px solid #6e6e6e; border-left: 1px solid #6e6e6e; background: #fff; outline: 2px solid #e2e2e2; font: 12px/17px "Liberation Mono", "Noto Sans CJK SC", monospace; }
.log { display: flex; justify-content: space-between; height: 34px; border-bottom: 1px solid #999; padding-left: 2px; }
.vscroll { display: grid; width: 17px; background: #f1f1f1; }
.vscroll button { display: grid; place-items: center; }
.prompt { display: flex; align-items: center; height: 19px; padding: 0 16px 0 2px; }
.caret { width: 2px; height: 15px; margin-left: 8px; background: #000; }
.prompt input { flex: 1; outline: 0; }
.prompt .hscroll { background: #f1f1f1; }

.status { display: flex; align-items: center; height: 22px; padding: 0 3px 0 5px; }
.status output { flex: 1; display: flex; gap: 9px; }
.status button { padding: 0 6px; height: 18px; line-height: 18px; }
.status .on { border: 1px solid #3596f0; background: #e2ecf8; margin: 0 1px; padding: 0 4px; line-height: 16px; }
.brand { display: flex; align-items: center; gap: 4px; width: 112px; height: 16px; margin-left: 8px; padding-left: 2px; background: #fff; font: 700 10px/14px "Liberation Serif", serif; color: #243248; }
.brand svg { width: 16px; height: 16px; }

.palette { position: absolute; left: 194px; top: 118px; width: 134px; padding-bottom: 14px; background: #f0f0f0; border-top: 1px solid #1a7dcf; box-shadow: 0 0 10px rgba(0, 0, 0, .3); }
.palette header { display: flex; align-items: center; justify-content: space-between; height: 30px; padding: 0 1px 0 8px; background: #fff; }
.close { width: 19px; height: 19px; margin-top: 3px; background: #c75050; color: #fff; font: 700 11px/16px "Liberation Sans", sans-serif; }
.anno { display: grid; grid-template-columns: 20px 1fr; align-items: center; width: 100%; height: 30px; padding: 1px 3px 0; border: 1px solid #a0a0a0; font-size: 14px; line-height: 20px; }
.anno svg { width: 20px; height: 20px; }
.anno.active { background: #c0dcfa; border-color: #3897f5; }
.arrows { position: absolute; left: -1px; top: -1px; width: 100%; height: 100%; pointer-events: none; fill: none; stroke: #f00; stroke-width: 3; overflow: visible; filter: drop-shadow(2px 3px 2px rgba(0, 0, 0, .5)); }
```
